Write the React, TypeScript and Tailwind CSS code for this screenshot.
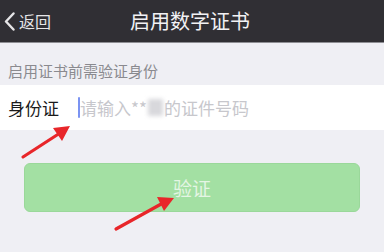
import React from "react";

export default function App() {
  return (
    <div
      className="relative w-[384px] h-[252px] overflow-hidden bg-[#efeff4]"
      style={{ fontFamily: '"Noto Sans CJK SC", "Noto Sans", sans-serif' }}
    >
      {/* Header */}
      <div className="relative h-[43px] bg-[#302f34] border-b border-[#8e8e93] flex items-center">
        <div className="flex items-center pl-[4px] text-[#e6e6e8]">
          <svg width="11" height="19" viewBox="0 0 11 19" className="mr-[4px]">
            <path d="M9.5 1.5 L2 9.5 L9.5 17.5" fill="none" stroke="#e6e6e8" strokeWidth="2.4" strokeLinecap="round" strokeLinejoin="round" />
          </svg>
          <span className="text-[16px] leading-[16px]">返回</span>
        </div>
        <div className="absolute left-0 right-0 top-0 h-[42px] flex items-center justify-center pointer-events-none">
          <span className="text-[20px] leading-[20px] text-[#f2f2f4] ml-[-4px]">启用数字证书</span>
        </div>
      </div>

      {/* Section label */}
      <div className="h-[42px] px-2 pt-[20px] text-[15px] leading-[15px] text-[#8a8a8f]">
        启用证书前需验证身份
      </div>

      {/* Input row */}
      <div className="h-[45px] bg-white flex items-center px-2">
        <div className="w-[70px] text-[17px] leading-[17px] text-[#1a1a1a]">身份证</div>
        <div className="flex items-center">
          <div className="w-[2px] h-[21px] bg-[#7b93f2] rounded-[1px]" />
          <span className="text-[17px] leading-[17px] text-[#c7c7cc] whitespace-nowrap flex items-center">
            请输入**
            <span className="inline-block w-[15px] h-[17px] bg-[#d8d8dc] blur-[2px] mx-[1px]" />
            的证件号码
          </span>
        </div>
      </div>

      {/* Button */}
      <div className="px-[24px] mt-[33px]">
        <div className="h-[49px] rounded-[6px] bg-[#a3e0a3] border border-[#9ad89a] flex items-center justify-center">
          <span className="text-[19px] leading-[19px] text-[#e4f5e4]">验证</span>
        </div>
      </div>

      {/* Annotation arrows */}
      <svg className="absolute left-0 top-0 pointer-events-none" width="384" height="252" viewBox="0 0 384 252">
        <line x1="23" y1="157" x2="60" y2="133" stroke="#e8262a" strokeWidth="3.2" strokeLinecap="round" />
        <polygon points="70,126 53,128 62,141" fill="#e8262a" />
        <line x1="116" y1="229" x2="163" y2="203" stroke="#e8262a" strokeWidth="3.2" strokeLinecap="round" />
        <polygon points="174,198 157,197 164,211" fill="#e8262a" />
      </svg>
    </div>
  );
}
